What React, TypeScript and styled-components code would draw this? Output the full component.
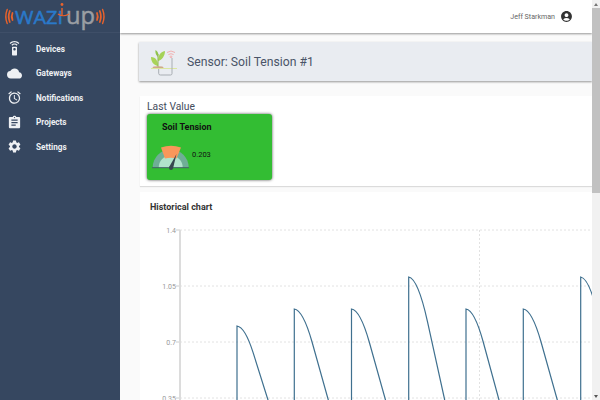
import React from 'react'
import styled, { createGlobalStyle } from 'styled-components'
import {
  MdAccountCircle,
  MdAssignment,
  MdCloud,
  MdOutlineAccessAlarm,
  MdSettings,
  MdSettingsRemote,
} from 'react-icons/md'

const navItems = [
  { label: 'Devices', Icon: MdSettingsRemote },
  { label: 'Gateways', Icon: MdCloud },
  { label: 'Notifications', Icon: MdOutlineAccessAlarm },
  { label: 'Projects', Icon: MdAssignment },
  { label: 'Settings', Icon: MdSettings },
]

const peaks = [
  { x: 237, y: 326, w: 31 },
  { x: 294.3, y: 309, w: 34 },
  { x: 351.5, y: 309, w: 34 },
  { x: 408.7, y: 277, w: 36 },
  { x: 466, y: 309, w: 33 },
  { x: 523.3, y: 309, w: 34 },
  { x: 580.7, y: 277, w: 36 },
]

// chart is drawn in page coordinates, shifted by its own origin
const ORIGIN_X = 140
const ORIGIN_Y = 222
const BASE = 400

const peakPath = ({ x, y, w }: { x: number; y: number; w: number }) => {
  const d = BASE - y
  return `M${x} 470V${y}C${x + 0.18 * w} ${y + 0.01 * d} ${x + 0.36 * w} ${y + 0.15 * d} ${x + 0.52 * w} ${y + 0.36 * d}L${x + w} ${BASE}L${x + w + 18} 470`
}

const ticks = [
  { label: '1.4', y: 230 },
  { label: '1.05', y: 286 },
  { label: '0.7', y: 342 },
  { label: '0.35', y: 398 },
]

const Logo = () => (
  <LogoSvg viewBox="0 0 120 32" aria-label="WAZIUP">
    <g fill="none" stroke="#e8622c" strokeLinecap="round">
      <path d="M12.5 13Q11 16.5 12.5 20" strokeWidth="1.8" />
      <path d="M9.8 11Q7.6 16.5 9.8 22" strokeWidth="1.7" />
      <path d="M7.2 9.5Q4.4 16.5 7.2 23.5" strokeWidth="1.4" />
      <path d="M97 13Q98.5 16.5 97 20" strokeWidth="1.8" />
      <path d="M99.8 11Q102 16.5 99.8 22" strokeWidth="1.7" />
      <path d="M102.6 9.5Q105.4 16.5 102.6 23.5" strokeWidth="1.4" />
    </g>
    <LogoWord $tone="#2a79c9" $size={18.5} x="15" y="24" textLength="48" lengthAdjust="spacingAndGlyphs">
      WAZI
    </LogoWord>
    <LogoWord $tone="#9a9ea3" $size={24} x="66" y="23.5" textLength="29" lengthAdjust="spacingAndGlyphs">
      up
    </LogoWord>
    <circle cx="62" cy="4.5" r="1.4" fill="#e8622c" />
    <path d="M58 14Q63 17.5 69 14" fill="none" stroke="#e8622c" strokeWidth="1.2" />
    <path d="M62 8V15" stroke="#e8622c" strokeWidth="1.4" />
  </LogoSvg>
)

const SensorIcon = () => (
  <svg width="28" height="28" viewBox="0 0 28 28">
    <path d="M8 18C3 17 1 13 1 9 6 9 8 13 8 18Z" fill="#a9d45a" />
    <path d="M8 13C12 12 15 8 15 3 10 4 8 8 8 13Z" fill="#a5d257" />
    <path d="M8 9C6 7 5 5 5.5 2 8 3.5 9 6 8 9Z" fill="#8fc44c" />
    <path d="M8 6V20" stroke="#8fb84c" strokeWidth="1" />
    <ellipse cx="8" cy="19.5" rx="5.5" ry="1.3" fill="#cfa98a" />
    <path d="M1 20.5H27" stroke="#dbe6a0" strokeWidth="1" />
    <path d="M8.7 21V25.5Q8.7 27 10.5 27H20.5Q22 27 22 25.5V10" fill="none" stroke="#a8adb3" strokeWidth="1" />
    <g fill="none" stroke="#f2a8a8" strokeWidth="0.9">
      <path d="M17 4.5Q21 1.5 25 4.5" />
      <path d="M18.4 6.6Q21 4.8 23.6 6.6" />
      <circle cx="21" cy="8.8" r="0.9" />
    </g>
  </svg>
)

const Gauge = () => (
  <svg width="38" height="26" viewBox="0 0 38 26">
    <path d="M0.7 23.5A18 18 0 0 1 36.7 23.5Z" fill="#6fae96" />
    <path d="M6.7 23.5A12 12 0 0 1 30.7 23.5Z" fill="#b1e3cb" />
    <path d="M9 3.5Q19 0 29 3.5L24.5 14.5Q19 13 13 14.5Z" fill="#f9975a" />
    <path d="M0 23.7H37" stroke="#45606b" strokeWidth="1" />
    <path d="M24.5 10L21 24.5 17 23.2Z" fill="#37474f" />
    <circle cx="19" cy="24" r="2" fill="#37474f" />
  </svg>
)

const Chart = () => (
  <ChartSvg width="452" height="250" viewBox={`${ORIGIN_X} ${ORIGIN_Y} 452 250`}>
    {ticks.map((t) => (
      <g key={t.label}>
        <GridLine x1="180" x2="592" y1={t.y} y2={t.y} />
        <path d={`M176 ${t.y}H180`} stroke="#ccc" strokeWidth="1" />
        <TickLabel x="176" y={t.y + 2.5} textAnchor="end">
          {t.label}
        </TickLabel>
      </g>
    ))}
    <GridLine x1="479.5" x2="479.5" y1="230" y2="470" />
    <path d="M180 230V470" stroke="#dcdcdc" strokeWidth="2" />
    {peaks.map((p) => (
      <path key={p.x} d={peakPath(p)} fill="none" stroke="#3f708f" strokeWidth="1.2" />
    ))}
  </ChartSvg>
)

export default function App() {
  return (
    <Page>
      <GlobalStyle />
      <Sidebar>
        <LogoBar>
          <Logo />
        </LogoBar>
        <Nav>
          {navItems.map(({ label, Icon }) => (
            <NavItem key={label}>
              <NavIcon>
                <Icon size={15} />
              </NavIcon>
              {label}
            </NavItem>
          ))}
        </Nav>
      </Sidebar>
      <Main>
        <TopBar>
          <UserName>Jeff Starkman</UserName>
          <MdAccountCircle size={13} color="#333" />
        </TopBar>
        <Content>
          <SensorHeader>
            <SensorIcon />
            <SensorTitle>Sensor: Soil Tension #1</SensorTitle>
          </SensorHeader>
          <ValueCard>
            <CardTitle>Last Value</CardTitle>
            <GreenCard>
              <GreenTitle>Soil Tension</GreenTitle>
              <GreenBody>
                <Gauge />
                <Reading>0.203</Reading>
              </GreenBody>
            </GreenCard>
          </ValueCard>
          <ChartCard>
            <ChartTitle>Historical chart</ChartTitle>
            <Chart />
          </ChartCard>
        </Content>
      </Main>
      <ScrollRail>
        <ScrollArrow $dir="up" />
        <ScrollThumb />
        <ScrollArrow $dir="down" />
      </ScrollRail>
    </Page>
  )
}

const GlobalStyle = createGlobalStyle`
  html, body {
    margin: 0;
    height: 100%;
    overflow: hidden;
    font-family: Roboto, "Liberation Sans", sans-serif;
  }
  #root {
    height: 100%;
  }
`

const Page = styled.div`
  display: flex;
  width: 600px;
  height: 400px;
  background: #fafafa;
`

const Sidebar = styled.aside`
  flex: 0 0 120px;
  background: #364760;
  color: #fff;
`

const LogoBar = styled.div`
  height: 32px;
  border-bottom: 1px solid #3f4f68;
`

const LogoSvg = styled.svg`
  display: block;
  width: 120px;
  height: 32px;
`

const LogoWord = styled.text<{ $tone: string; $size: number }>`
  font-family: "Open Sans", Lato, sans-serif;
  font-size: ${(props) => props.$size}px;
  font-weight: 400;
  fill: ${(props) => props.$tone};
  stroke: ${(props) => props.$tone};
  stroke-width: 0.5;
`

const Nav = styled.nav`
  display: flex;
  flex-direction: column;
  padding-top: 3.5px;
`

const NavItem = styled.div`
  display: flex;
  align-items: center;
  height: 24.5px;
  font-size: 8.2px;
  font-weight: 700;
  color: #eef0f3;
`

const NavIcon = styled.span`
  display: flex;
  justify-content: center;
  width: 28px;
  margin-right: 8px;
`

const Main = styled.main`
  flex: 1;
  min-width: 0;
  overflow: hidden;
`

const ScrollRail = styled.div`
  flex: 0 0 8px;
  display: flex;
  flex-direction: column;
  background: #f1f1f1;
`

const ScrollThumb = styled.div`
  height: 185px;
  margin-bottom: auto;
  background: #c1c1c1;
`

const ScrollArrow = styled.div<{ $dir: 'up' | 'down' }>`
  flex: 0 0 8px;
  display: flex;
  align-items: center;
  justify-content: center;

  &::before {
    content: '';
    border-left: 2px solid transparent;
    border-right: 2px solid transparent;
    ${(props) =>
      props.$dir === 'up' ? 'border-bottom: 3px solid #777;' : 'border-top: 3px solid #555;'}
  }
`

const TopBar = styled.header`
  display: flex;
  align-items: center;
  justify-content: flex-end;
  gap: 4.5px;
  height: 33px;
  padding-right: 19.5px;
  background: #fff;
  box-shadow: 0 1px 2px rgba(0, 0, 0, 0.4);
`

const UserName = styled.span`
  font-size: 7.1px;
  color: #666;
`

const Content = styled.div`
  display: flex;
  flex-direction: column;
  height: 797px;
  padding: 9px 0 0 19px;
`

const SensorHeader = styled.section`
  display: flex;
  align-items: center;
  height: 39px;
  padding-left: 11px;
  background: #e9ecf1;
  box-shadow: 0 1px 2px rgba(0, 0, 0, 0.4);
`

const SensorTitle = styled.h1`
  margin: 0 0 0 9px;
  font-size: 12.2px;
  font-weight: 400;
  color: #4a5468;
`

const ValueCard = styled.section`
  display: flex;
  flex-direction: column;
  height: 90px;
  margin: 15px 0 0 1px;
  padding: 5px 0 0 7px;
  box-sizing: border-box;
  background: #fff;
  box-shadow: 0 1px 1px rgba(0, 0, 0, 0.12);
`

const CardTitle = styled.div`
  height: 13px;
  font-size: 10.3px;
  line-height: 12px;
  color: #444c5c;
`

const GreenCard = styled.div`
  width: 125px;
  height: 66px;
  box-sizing: border-box;
  padding: 8px 0 0 15px;
  border-radius: 3px;
  background: #33bd33;
  box-shadow: 0 0 3px rgba(0, 0, 0, 0.7);
`

const GreenTitle = styled.div`
  font-size: 9px;
  font-weight: 700;
  color: #111;
`

const GreenBody = styled.div`
  display: flex;
  align-items: center;
  gap: 2px;
  margin: 12px 0 0 -10px;
`

const Reading = styled.span`
  margin-bottom: 5px;
  font-size: 7.5px;
  color: #111;
`

const ChartCard = styled.section`
  flex: 1;
  margin: 6px 0 0 1px;
  background: #fff;
`

const ChartTitle = styled.h2`
  margin: 0;
  padding: 10px 0 0 10px;
  height: 22px;
  box-sizing: border-box;
  font-size: 9px;
  line-height: 11px;
  font-weight: 700;
  color: #333;
`

const ChartSvg = styled.svg`
  display: block;
  margin-top: 8px;
`

const GridLine = styled.line`
  stroke: #e2e2e2;
  stroke-width: 1;
  stroke-dasharray: 2 2;
`

const TickLabel = styled.text`
  font-size: 7px;
  fill: #999;
`
